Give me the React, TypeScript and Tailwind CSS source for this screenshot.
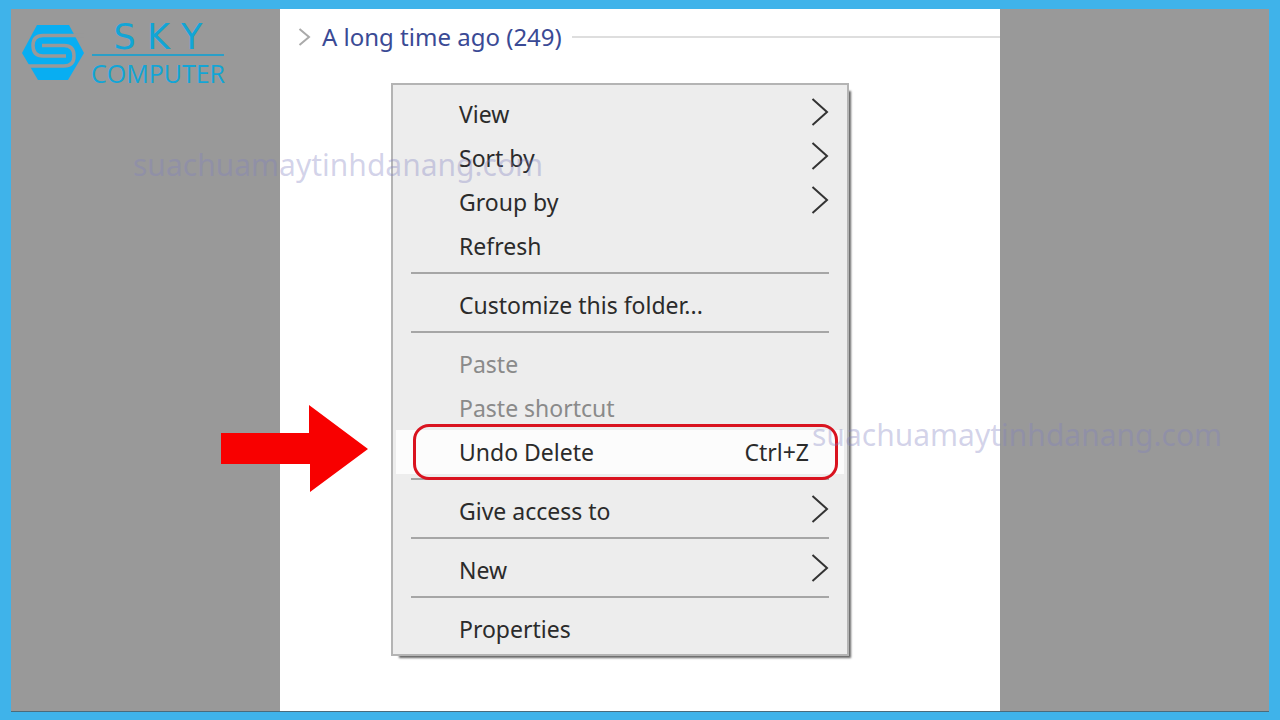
import { Fragment } from "react";

type Item = {
  label: string;
  submenu?: boolean;
  disabled?: boolean;
  shortcut?: string;
};

const groups: Item[][] = [
  [
    { label: "View", submenu: true },
    { label: "Sort by", submenu: true },
    { label: "Group by", submenu: true },
    { label: "Refresh" },
  ],
  [{ label: "Customize this folder..." }],
  [
    { label: "Paste", disabled: true },
    { label: "Paste shortcut", disabled: true },
    { label: "Undo Delete", shortcut: "Ctrl+Z" },
  ],
  [{ label: "Give access to", submenu: true }],
  [{ label: "New", submenu: true }],
  [{ label: "Properties" }],
];

function Logo() {
  return (
    <div className="absolute left-[11px] top-[11px] flex items-start text-[#12a5d6]">
      <svg viewBox="0 0 62 56" className="mt-[5px] h-[56px] w-[62px]" aria-hidden="true">
        <path d="M0 28L15 0H47L62 28L46 55H16Z" fill="#08aef2" />
        <g fill="none" stroke="#999" strokeWidth="3.5">
          <path d="M62 10.500H21Q11 10.500 11 20.500Q11 31 21 31H44" />
          <path d="M20 20.500H42Q52 20.500 52 31Q52 41 42 41H0" />
        </g>
      </svg>
      <div className="ml-[7px] flex flex-col items-center">
        <span className="font-['DejaVu_Sans',sans-serif] text-[35px] leading-[34px]">S K Y</span>
        <span className="h-[2px] w-[132px] bg-[#2a9fc8]" />
        <span className="font-['Open_Sans',sans-serif] text-[25px] leading-[34px]">COMPUTER</span>
      </div>
    </div>
  );
}

function Chevron() {
  return (
    <svg viewBox="0 0 18 30" className="mb-1 h-[30px] w-[18px]" fill="none" stroke="#333" strokeWidth="2" aria-hidden="true">
      <path d="M1.500 2L16 15L1.500 28" />
    </svg>
  );
}

function MenuItem({ item }: { item: Item }) {
  const tone = item.disabled ? "text-[#8a8a8a]" : "text-[#2b2b2b]";
  const fill = item.shortcut ? "bg-[#fcfcfc]" : "";
  return (
    <button
      type="button"
      role="menuitem"
      disabled={item.disabled}
      className={`relative flex h-11 w-full items-center justify-between pl-[63px] pr-[15px] ${tone} ${fill}`}
    >
      <span>{item.label}</span>
      {item.shortcut && <span className="pr-5">{item.shortcut}</span>}
      {item.submenu && <Chevron />}
      {item.shortcut && (
        <span className="absolute -bottom-[6px] -top-[6px] left-[17px] right-[6px] rounded-2xl border-[3px] border-[#d9131f]" />
      )}
    </button>
  );
}

export default function App() {
  return (
    <main className="relative min-h-screen border-x-[11px] border-b-8 border-t-[9px] border-[#3fb3ea] bg-[#999] font-['Noto_Sans',sans-serif]">
      <section className="mx-auto min-h-[703px] max-w-[720px] bg-white pb-14">
        <header className="flex h-[56px] items-center pl-[18px]">
          <svg viewBox="0 0 14 20" className="h-5 w-[14px]" fill="none" stroke="#aaa" strokeWidth="2" aria-hidden="true">
            <path d="M1.500 2L11 10L1.500 18" />
          </svg>
          <h1 className="ml-[10px] text-[24px] leading-8 text-[#3a4a95]">A long time ago (249)</h1>
          <span className="ml-[10px] h-[2px] flex-1 bg-[#dedede]" />
        </header>
        <div
          role="menu"
          className="ml-[111px] mt-[18px] w-[458px] border-2 border-[#b4b4b4] bg-[#ededed] px-[3px] pb-[3px] pt-[7px] text-[23px] leading-8 shadow-[5px_5px_2px_-3px_#666]"
        >
          {groups.map((group, i) => (
            <Fragment key={group[0].label}>
              {i > 0 && (
                <div role="separator" className="flex h-[15px] pl-[15px] pr-[15px] pt-1">
                  <span className="h-[2px] flex-1 bg-[#a6a6a6]" />
                </div>
              )}
              {group.map((item) => (
                <MenuItem key={item.label} item={item} />
              ))}
            </Fragment>
          ))}
        </div>
      </section>
      <div className="absolute inset-x-0 bottom-0 h-px bg-[#4a6b7c]" />
      <Logo />
      <svg viewBox="0 0 148 88" className="absolute left-[210px] top-[396px] h-[88px] w-[148px]" fill="#f80000" aria-hidden="true">
        <path d="M0 28H88V0L147 44L89 87V59H0Z" />
      </svg>
      <span className="absolute left-[122px] top-[136px] text-[30px] leading-10 text-[#8080c0]/35">
        suachuamaytinhdanang.com
      </span>
      <span className="absolute left-[801px] top-[406px] text-[30px] leading-10 text-[#8080c0]/35">
        suachuamaytinhdanang.com
      </span>
    </main>
  );
}
